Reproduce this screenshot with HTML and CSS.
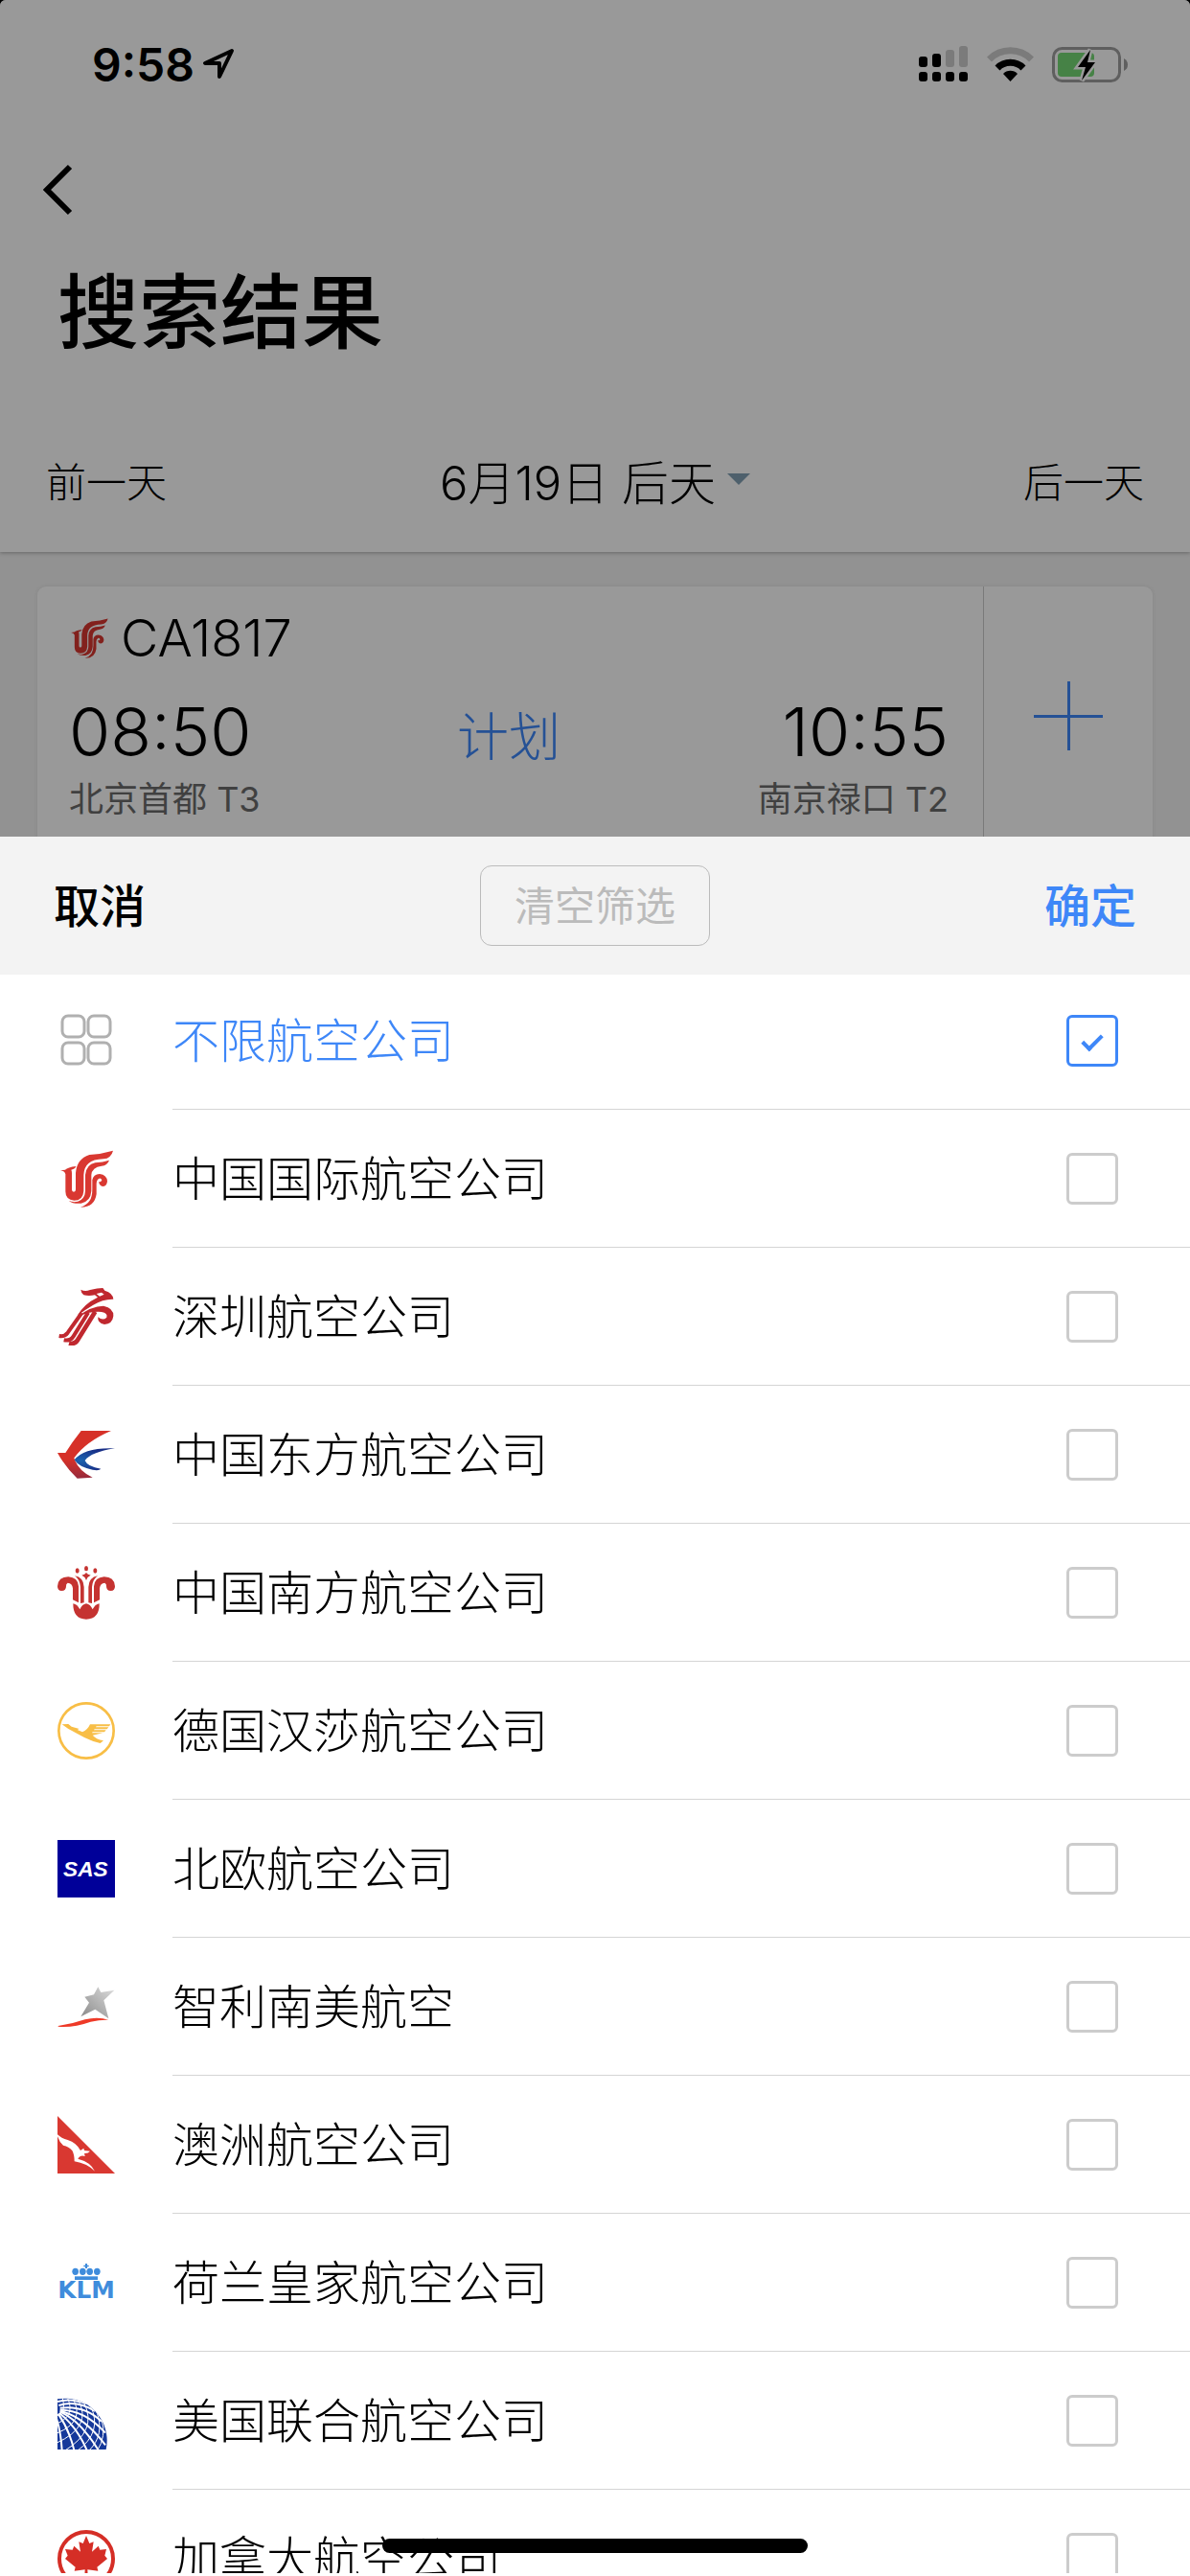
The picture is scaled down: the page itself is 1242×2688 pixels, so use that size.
FILE: index.html
```
<!DOCTYPE html>
<html lang="zh-CN">
<head>
    <meta charset="UTF-8">
    <meta name="viewport" content="width=device-width, initial-scale=1.0">
    <title>搜索结果</title>
    <link rel="stylesheet" href="styles.css">
</head>

<body>
    <svg class="defs" aria-hidden="true">
        <symbol id="air-china" viewBox="0 0 180 180">
            <g fill="#d93831">
                <path d="M9 64L24 62Q32 54 58 51Q56 59 43 62Q45 66 45 72V124Q45 131 51 131Q57 131 57 124V72Q60 28 100 15Q140 12 174 2Q168 26 144 28Q112 29 97 42Q83 54 82 78V128Q80 158 52 158Q25 156 25 130V76Q23 66 9 64Z"/>
                <path d="M162 32Q156 48 138 50Q108 54 106 78V128Q104 160 74 167Q50 170 35 158Q48 165 64 161Q86 153 87 128V78Q90 46 118 40Q142 38 162 32Z"/>
                <path d="M72 179Q92 172 101 158Q109 146 109 122V94Q112 76 132 75Q155 78 156 98Q154 114 141 114Q129 110 130 99Q138 101 139 94Q136 88 131 89Q122 93 122 106V138Q116 180 72 179Z"/>
            </g>
        </symbol>
    </svg>

    <div class="page">
        <header class="top">
            <div class="status-bar">
                <div class="status-left">
                    <span>9:58</span>
                    <svg width="34" height="34" viewBox="0 0 34 34" fill="none" stroke="#000" stroke-width="4" stroke-linejoin="round"><path d="M31 3L3 16H18V30Z"/></svg>
                </div>
                <div class="status-right">
                    <svg width="52" height="38" viewBox="0 0 52 38">
                        <rect x="0" y="11" width="9" height="11" rx="3"/>
                        <rect x="14" y="8" width="9" height="14" rx="3"/>
                        <rect x="28" y="4" width="9" height="18" rx="3" fill="#cdcdcd"/>
                        <rect x="42" y="0" width="9" height="22" rx="3" fill="#cdcdcd"/>
                        <rect x="0" y="27" width="9" height="10" rx="3"/>
                        <rect x="14" y="27" width="9" height="10" rx="3"/>
                        <rect x="28" y="27" width="9" height="10" rx="3"/>
                        <rect x="42" y="27" width="9" height="10" rx="3"/>
                    </svg>
                    <svg width="49" height="36" viewBox="0 0 49 36" fill="none" stroke-width="7">
                        <path d="M2.5 13A31 31 0 0 1 46.500 13" stroke="#cdcdcd"/>
                        <path d="M11 22A19 19 0 0 1 38 22" stroke="#000"/>
                        <path d="M24.500 36L17 28A10.500 10.500 0 0 1 32 28Z" fill="#000" stroke="none"/>
                    </svg>
                    <svg width="80" height="37" viewBox="0 0 80 37">
                        <rect x="1.500" y="1.500" width="69" height="34" rx="9" fill="none" stroke="#9f9f9f" stroke-width="3"/>
                        <rect x="6" y="6" width="38" height="25" rx="4" fill="#75d975"/>
                        <path d="M75 12Q79 14 79 18.500Q79 23 75 25Z" fill="#9f9f9f"/>
                        <path d="M40 3L27 21H35L31 35L45 16H37Z" stroke="#fff" stroke-width="5"/>
                        <path d="M40 3L27 21H35L31 35L45 16H37Z"/>
                    </svg>
                </div>
            </div>
            <nav class="nav">
                <button class="back" type="button" aria-label="返回">
                    <svg width="32" height="54" viewBox="0 0 32 54" fill="none" stroke="#000" stroke-width="6"><path d="M28 3L4 27L28 51"/></svg>
                </button>
            </nav>
            <h1>搜索结果</h1>
            <div class="date-bar">
                <button type="button">前一天</button>
                <button class="date" type="button">6月19日 后天<i class="arrow"></i></button>
                <button type="button">后一天</button>
            </div>
        </header>

        <main class="results">
            <article class="card">
                <div class="flight">
                    <div class="flight-no">
                        <svg width="42" height="42"><use href="#air-china"/></svg>
                        <span>CA1817</span>
                    </div>
                    <div class="flight-row">
                        <div class="time">08:50</div>
                        <div class="state">计划</div>
                        <div class="time end">10:55</div>
                    </div>
                    <div class="airports">
                        <span>北京首都 T3</span>
                        <span>南京禄口 T2</span>
                    </div>
                </div>
                <button class="add" type="button" aria-label="添加">
                    <svg width="72" height="72" viewBox="0 0 72 72" stroke="#3e87f8" stroke-width="3"><path d="M0 36.500H72M36.500 0V72"/></svg>
                </button>
            </article>
        </main>
    </div>

    <div class="overlay"></div>

    <form class="sheet">
        <div class="sheet-header">
            <button class="cancel" type="button">取消</button>
            <button class="clear" type="button">清空筛选</button>
            <button class="ok" type="button">确定</button>
        </div>
        <div class="list">
            <label class="row active">
                <svg class="logo" viewBox="0 0 60 60" fill="none" stroke="#b0b0b0" stroke-width="3">
                    <rect x="5" y="4" width="23" height="22" rx="6"/>
                    <rect x="32" y="4" width="23" height="22" rx="6"/>
                    <rect x="5" y="32" width="23" height="22" rx="6"/>
                    <rect x="32" y="32" width="23" height="22" rx="6"/>
                </svg>
                <span class="cell"><span class="name">不限航空公司</span><input type="checkbox" checked></span>
            </label>
            <label class="row">
                <svg class="logo"><use href="#air-china"/></svg>
                <span class="cell"><span class="name">中国国际航空公司</span><input type="checkbox"></span>
            </label>
            <label class="row">
                <svg class="logo" viewBox="0 0 180 180">
                    <path fill="#c0282f" fill-rule="evenodd" d="M73 5Q86 12 102 6Q126 0 142 0L148 8Q174 16 175 35Q142 34 112 53Q86 68 62 87Q82 50 126 29L117 22Q98 26 82 22Q74 16 73 5ZM122 18L132 26L146 20L138 14Z"/>
                    <path fill="#c0282f" d="M62 90Q106 56 144 56Q176 62 175 88Q172 113 147 114Q124 110 127 91Q142 104 154 92Q158 78 138 75Q104 72 62 90Z"/>
                    <g fill="none" stroke="#c0282f" stroke-width="12"><path d="M5 150Q22 153 32 140L76 78"/><path d="M20 163Q40 167 50 151L96 77"/><path stroke-width="14" d="M36 173Q56 178 66 158L118 74"/></g>
                </svg>
                <span class="cell"><span class="name">深圳航空公司</span><input type="checkbox"></span>
            </label>
            <label class="row">
                <svg class="logo" viewBox="0 0 180 180">
                    <defs>
                        <linearGradient id="mu-red" x2="0" y2="1"><stop offset=".6" stop-color="#d63128"/><stop offset="1" stop-color="#962a3c"/></linearGradient>
                        <radialGradient id="mu-blue" cx=".15" cy=".55" r=".6"><stop stop-color="#1c64b0"/><stop offset="1" stop-color="#182f87"/></radialGradient>
                    </defs>
                    <path fill="url(#mu-red)" d="M74 15H168Q90 48 52 100Q64 140 110 161L62 164Q24 128 0 84H25Q46 50 74 15Z"/>
                    <path fill="url(#mu-blue)" d="M53 106Q84 66 180 70Q104 82 86 108Q94 128 136 134Q130 141 110 137Q66 128 53 106Z"/>
                </svg>
                <span class="cell"><span class="name">中国东方航空公司</span><input type="checkbox"></span>
            </label>
            <label class="row">
                <svg class="logo" viewBox="0 0 180 180" fill="#c53331">
                    <g id="cz-half"><path d="M0 70Q2 40 34 40Q64 42 66 70V121L48 112V76Q46 60 32 59Q26 62 27 70Q27 84 13 84Q0 84 0 70Z"/><path d="M54 37Q82 42 83 72V121L72 123V72Q70 48 54 37Z"/></g>
                    <use href="#cz-half" transform="matrix(-1 0 0 1 180 0)"/>
                    <path d="M49 124Q62 126 70 142Q77 126 90 124Q103 126 110 142Q118 126 131 124Q132 172 90 173Q48 172 49 124Z"/>
                    <path d="M76 35Q86 33 90 27Q94 33 104 35Q94 39 90 51Q86 39 76 35Z"/>
                    <ellipse cx="62" cy="21" rx="6" ry="8"/><ellipse cx="90" cy="14" rx="6" ry="8"/><ellipse cx="118" cy="21" rx="6" ry="8"/>
                </svg>
                <span class="cell"><span class="name">中国南方航空公司</span><input type="checkbox"></span>
            </label>
            <label class="row">
                <svg class="logo" viewBox="0 0 180 180" fill="#f8be46">
                    <circle cx="90" cy="90" r="86" fill="none" stroke="#f8be46" stroke-width="8"/>
                    <path d="M14 70L34 69L44 77L68 84L62 87L78 94Q94 88 102 70H166L162 76H122L120 79H160L155 85H116L114 88H152L147 94H110L108 97H142L110 104Q120 116 144 121L134 129Q110 124 84 111L34 84Z"/>
                </svg>
                <span class="cell"><span class="name">德国汉莎航空公司</span><input type="checkbox"></span>
            </label>
            <label class="row">
                <svg class="logo" viewBox="0 0 180 180">
                    <rect width="180" height="180" fill="#000099"/>
                    <text class="sas" x="88" y="115" text-anchor="middle">SAS</text>
                </svg>
                <span class="cell"><span class="name">北欧航空公司</span><input type="checkbox"></span>
            </label>
            <label class="row">
                <svg class="logo" viewBox="0 0 180 180">
                    <defs><linearGradient id="la-star" x1="0" y1="1" x2="1" y2="0"><stop stop-color="#888"/><stop offset="1" stop-color="#ddd"/></linearGradient></defs>
                    <path fill="url(#la-star)" d="M127 28L136 45L178 38L145 70L160 127L118 98L73 121L99 77L85 59L114 52Z"/>
                    <path fill="#ee3a28" d="M2 150Q46 144 86 130Q126 120 160 131Q134 130 104 137Q50 156 2 152Z"/>
                </svg>
                <span class="cell"><span class="name">智利南美航空</span><input type="checkbox"></span>
            </label>
            <label class="row">
                <svg class="logo" viewBox="0 0 180 180">
                    <path fill="#d93831" d="M0 0L180 180H0Z"/>
                    <path fill="#fff" d="M0 58Q12 70 32 75Q60 84 72 108L82 101L84 108L102 110Q96 118 84 117L86 126Q72 120 64 134Q104 144 117 173Q92 148 53 142Q53 120 46 108Q36 96 18 92Q6 82 0 64Z"/>
                </svg>
                <span class="cell"><span class="name">澳洲航空公司</span><input type="checkbox"></span>
            </label>
            <label class="row">
                <svg class="logo" viewBox="0 0 180 180" fill="#3f8cdc">
                    <path d="M87 30H93V35H98V40H93V45H87V40H82V35H87Z"/>
                    <ellipse cx="56" cy="55" rx="10" ry="11"/><ellipse cx="79" cy="55" rx="10" ry="11"/><ellipse cx="101" cy="55" rx="10" ry="11"/><ellipse cx="124" cy="55" rx="10" ry="11"/>
                    <rect x="54" y="70" width="72" height="11"/>
                    <text class="klm" x="90" y="139" text-anchor="middle">KLM</text>
                </svg>
                <span class="cell"><span class="name">荷兰皇家航空公司</span><input type="checkbox"></span>
            </label>
            <label class="row">
                <svg class="logo" viewBox="0 0 180 180">
                    <clipPath id="ua-clip"><path d="M0 22A132 132 0 0 1 152 180H0Z"/></clipPath>
                    <g clip-path="url(#ua-clip)" fill="none" stroke="#fff">
                        <path fill="#15389a" stroke="none" d="M0 0H180V180H0Z"/>
                        <g stroke-width="6">
                            <path d="M0 30Q40 18 90 36"/><path d="M4 42Q60 24 118 60"/><path d="M8 50Q84 40 138 92"/><path d="M8 56Q86 56 150 128"/><path d="M8 60Q80 74 150 166"/><path d="M8 62Q70 88 128 182"/><path d="M6 66Q60 108 92 182"/><path d="M2 68Q36 116 52 182"/><path d="M-4 80Q10 120 14 182"/>
                        </g>
                        <g stroke-width="3">
                            <path d="M16 20Q28 62 0 74"/><path d="M32 20Q56 74 0 98"/><path d="M48 20Q88 92 0 128"/><path d="M64 24Q112 108 -4 160"/><path d="M82 32Q128 120 22 184"/><path d="M104 44Q142 126 62 184"/><path d="M122 60Q150 134 98 184"/><path d="M138 84Q154 140 124 184"/>
                        </g>
                    </g>
                </svg>
                <span class="cell"><span class="name">美国联合航空公司</span><input type="checkbox"></span>
            </label>
            <label class="row">
                <svg class="logo" viewBox="0 0 180 180">
                    <circle cx="90" cy="90" r="84" fill="none" stroke="#d52e26" stroke-width="12"/>
                    <path fill="#d52e26" d="M90 18L100 42L113 37L108 68L128 50L133 62L153 60L148 80L156 90L124 116L127 128L94 124L96 164H84L86 124L53 128L56 116L24 90L32 80L24 60L47 62L52 50L72 68L67 37L80 42Z"/>
                </svg>
                <span class="cell"><span class="name">加拿大航空公司</span><input type="checkbox"></span>
            </label>
        </div>
    </form>

    <div class="home-bar"></div>
</body>
</html>
```
FILE: styles.css
```
* {
    box-sizing: border-box;
}

html {
    background: #000;
}

body {
    margin: 0;
    height: 100vh;
    overflow: hidden;
    font-family: Inter, "Noto Sans CJK SC", sans-serif;
    font-weight: 300;
    font-size: 48px;
    color: #000;
}

button {
    padding: 0;
    border: 0;
    background: none;
    font: inherit;
    color: inherit;
}

svg {
    display: block;
    flex: none;
}

.defs {
    position: absolute;
    width: 0;
    height: 0;
}

.page {
    height: 100%;
    background: #f3f3f3;
    border-radius: 6px 6px 0 0;
    overflow: hidden;
}

.top {
    position: relative;
    background: #fff;
    box-shadow: 0 1px 4px rgba(0, 0, 0, 0.3);
}

/* status bar */
.status-bar {
    display: flex;
    justify-content: space-between;
    height: 132px;
    padding: 37px 64px 0 96px;
}

.status-left,
.status-right {
    display: flex;
    align-items: center;
    height: 60px;
}

.status-left {
    gap: 8px;
    font-weight: 600;
}

.status-right {
    gap: 19px;
}

.nav {
    display: flex;
    align-items: center;
    height: 132px;
    padding: 0 45px;
}

h1 {
    margin: 0;
    padding: 3px 60px 45px;
    font-size: 85px;
    line-height: 120px;
    font-weight: 500;
}

.date-bar {
    display: grid;
    grid-template-columns: 1fr auto 1fr;
    align-items: center;
    height: 144px;
    padding: 0 48px 8px;
    font-size: 42px;
}

.date-bar button:first-child {
    justify-self: start;
}

.date-bar button:last-child {
    justify-self: end;
}

.date-bar .date {
    display: flex;
    align-items: center;
    gap: 12px;
    font-size: 49px;
}

.arrow {
    border: 12px solid transparent;
    border-top-color: #83a1b5;
    border-bottom: 0;
}

/* flight card */
.results {
    padding: 36px 39px;
}

.card {
    display: flex;
    height: 270px;
    background: #fff;
    border-radius: 9px;
    box-shadow: 0 0 4px rgba(0, 0, 0, 0.08);
}

.flight {
    flex: 1;
    padding: 21px 36px 0 33px;
}

.flight-no {
    display: flex;
    align-items: center;
    gap: 12px;
    font-size: 54px;
    line-height: 66px;
}

.flight-row {
    display: grid;
    grid-template-columns: 1fr auto 1fr;
    align-items: center;
    height: 110px;
    padding-top: 20px;
}

.time {
    font-size: 70px;
    line-height: 90px;
}

.end {
    text-align: right;
}

.state {
    padding-top: 12px;
    font-size: 54px;
    color: #3e87f8;
    line-height: 78px;
}

.airports {
    display: flex;
    justify-content: space-between;
    font-size: 36px;
    font-weight: 400;
    line-height: 50px;
    color: #6c6c6c;
}

.add {
    display: flex;
    align-items: center;
    justify-content: center;
    width: 177px;
    border-left: 1px solid #ccc;
}

.overlay {
    position: fixed;
    inset: 0;
    background: rgba(0, 0, 0, 0.4);
}

/* filter sheet */
.sheet {
    position: fixed;
    top: 873px;
    right: 0;
    bottom: 0;
    left: 0;
    display: flex;
    flex-direction: column;
    padding-bottom: 3px;
    background: #fff;
}

.sheet-header {
    display: grid;
    grid-template-columns: 1fr auto 1fr;
    align-items: center;
    flex: none;
    height: 144px;
    padding: 0 56px;
    background: #f3f3f3;
    z-index: 1;
}

.sheet-header button {
    padding-bottom: 6px;
}

.cancel {
    justify-self: start;
    font-weight: 500;
}

.clear {
    width: 240px;
    height: 84px;
    border: 1px solid #bbb;
    border-radius: 12px;
    font-size: 42px;
    font-weight: 400;
    color: #bbb;
}

.ok {
    justify-self: end;
    font-weight: 500;
    color: #3e87f8;
}

.list {
    flex: 1;
    margin-top: -3px;
    overflow-y: auto;
    scrollbar-width: none;
}

.row {
    display: flex;
    align-items: center;
    gap: 60px;
    height: 144px;
    padding-left: 60px;
}

.logo {
    width: 60px;
    height: 60px;
}

.cell {
    display: flex;
    flex: 1;
    align-items: center;
    justify-content: space-between;
    height: 144px;
    padding-right: 75px;
    border-bottom: 1px solid #d5d5d5;
}

.name {
    padding-bottom: 7px;
    font-size: 49px;
}

.active {
    color: #3e87f8;
}

.row input {
    position: relative;
    appearance: none;
    width: 54px;
    height: 54px;
    margin: 0;
    border: 3px solid #ccc;
    border-radius: 6px;
}

.row input:checked {
    border-color: #3e87f8;
}

.row input:checked::after {
    content: "";
    position: absolute;
    top: 13px;
    left: 18px;
    box-sizing: border-box;
    width: 12px;
    height: 21px;
    border: solid #3e87f8;
    border-width: 0 4px 4px 0;
    transform: rotate(45deg);
}

.sas {
    font: italic bold 68px "Liberation Sans", sans-serif;
    fill: #fff;
}

.klm {
    font: bold 74px "DejaVu Sans", sans-serif;
}

.home-bar {
    position: fixed;
    bottom: 24px;
    left: 50%;
    width: 444px;
    height: 15px;
    margin-left: -222px;
    border-radius: 8px;
    background: #000;
}
```
